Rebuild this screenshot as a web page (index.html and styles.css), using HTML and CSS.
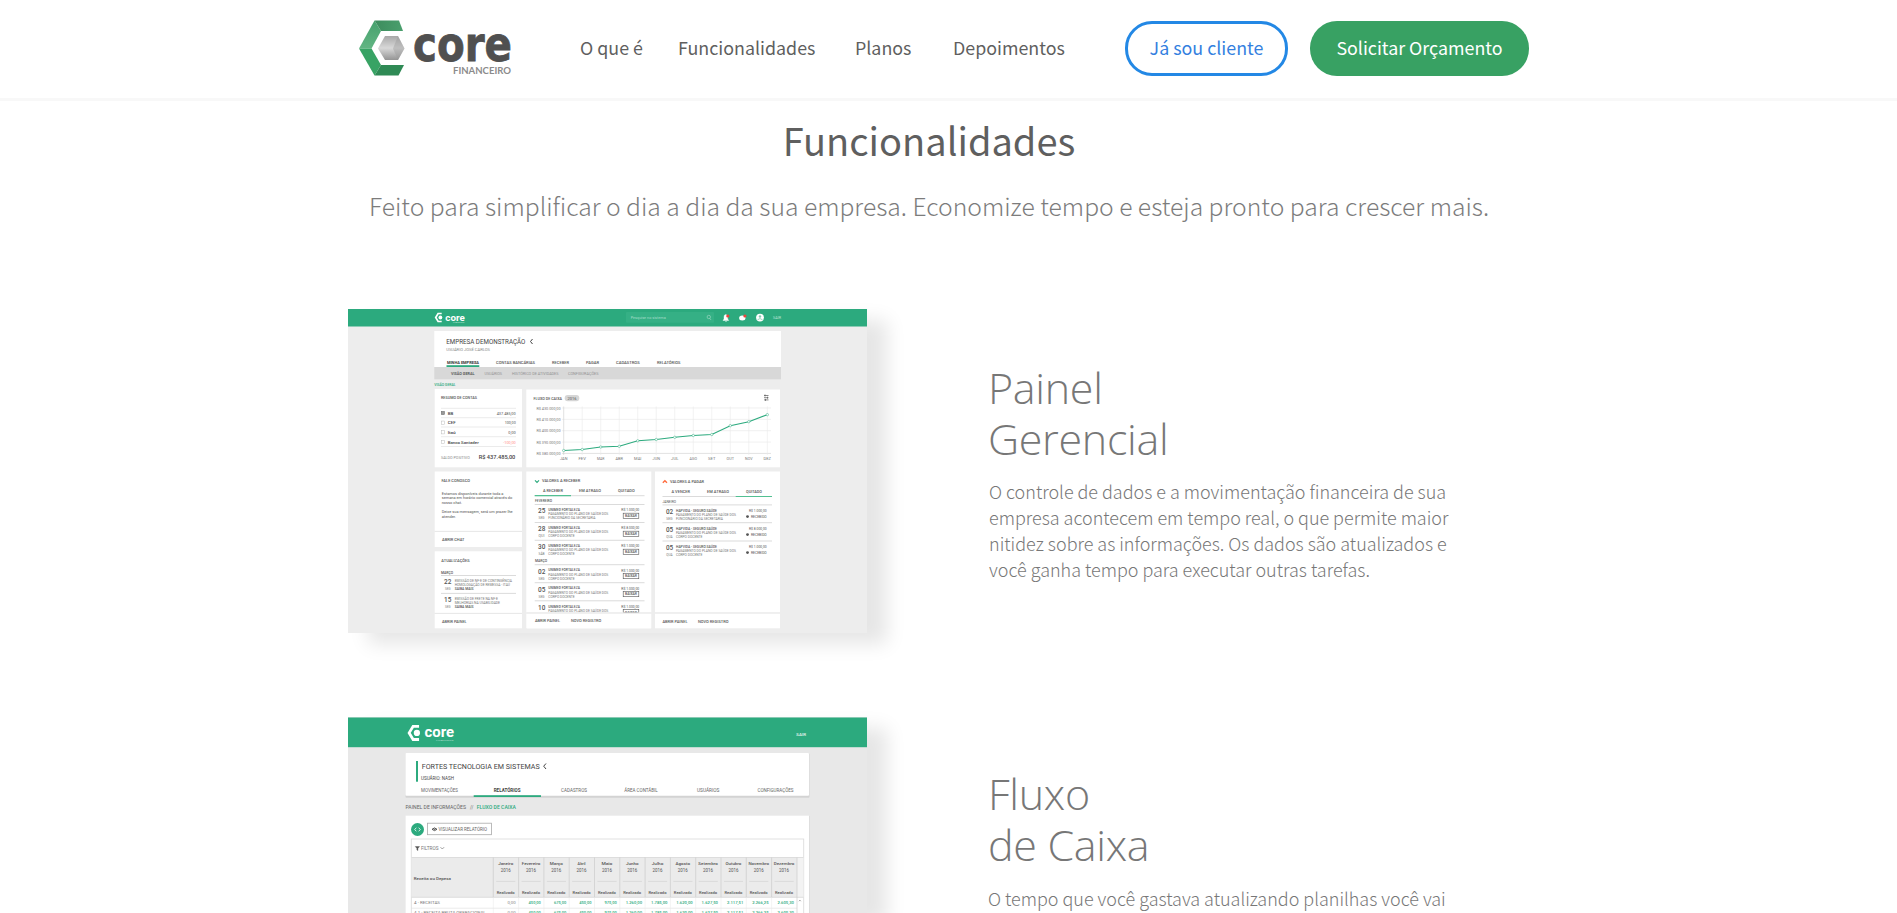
FILE: index.html
```html
<!DOCTYPE html>
<html lang="pt-BR">
<head>
<meta charset="utf-8">
<title>Core Financeiro</title>
<link rel="stylesheet" href="styles.css">
</head>
<body>
<header class="topbar">
  <div class="topbar-inner">
    <a class="brand">
      <svg width="153" height="58" viewBox="0 0 153 58">
        <defs>
          <linearGradient id="g1" x1="0" y1="0" x2="0" y2="1"><stop offset="0" stop-color="#45a06c"/><stop offset="1" stop-color="#62b583"/></linearGradient>
          <linearGradient id="g2" x1="0" y1="0" x2="1" y2="0"><stop offset="0" stop-color="#3d8c5d"/><stop offset="1" stop-color="#4a9f6d"/></linearGradient>
          <linearGradient id="g3" x1="0" y1="0" x2="0" y2="1"><stop offset="0" stop-color="#a8a8a8"/><stop offset=".5" stop-color="#d8d8d8"/><stop offset="1" stop-color="#949494"/></linearGradient>
        </defs>
        <path d="M0 28.500 15.500 0.500 22 11 12.500 28.500Z" fill="url(#g1)"/>
        <path d="M15.500 0.500H40L44 11H22Z" fill="url(#g2)"/>
        <path d="M0 28.500H12.500L22 45 15.500 55.500Z" fill="#38a364"/>
        <path d="M22 45H45L39.500 55.500H15.500Z" fill="#2f8a55"/>
        <path d="M19 28.500 26 16H39L45.500 28.500 39 40H26Z" fill="url(#g3)"/>
        <path d="M34 28.500 39 16 45.500 28.500 39 40Z" fill="#999" opacity=".4"/>
        <text x="54" y="41" class="brand-word" textLength="99" lengthAdjust="spacingAndGlyphs">core</text>
        <text x="94" y="53.500" class="brand-sub" textLength="58" lengthAdjust="spacingAndGlyphs">FINANCEIRO</text>
      </svg>
    </a>
    <nav class="menu">
      <a>O que é</a><a>Funcionalidades</a><a>Planos</a><a>Depoimentos</a>
    </nav>
    <a class="btn btn-outline">Já sou cliente</a>
    <a class="btn btn-solid">Solicitar Orçamento</a>
  </div>
</header>
<main class="features">
  <h1 class="title">Funcionalidades</h1>
  <p class="lead">Feito para simplificar o dia a dia da sua empresa. Economize tempo e esteja pronto para crescer mais.</p>
  <section class="feature">
    <svg class="shot" id="shot-dashboard" width="519" height="324" viewBox="348 309 519 324"></svg>
    <div class="copy">
      <h2>Painel<br>Gerencial</h2>
      <p>O controle de dados e a movimentação financeira de sua<br>empresa acontecem em tempo real, o que permite maior<br>nitidez sobre as informações. Os dados são atualizados e<br>você ganha tempo para executar outras tarefas.</p>
    </div>
  </section>
  <section class="feature feature-last">
    <svg class="shot" id="shot-cashflow" width="519" height="196" viewBox="348 717 519 196"></svg>
    <div class="copy copy-second">
      <h2>Fluxo<br>de Caixa</h2>
      <p>O tempo que você gastava atualizando planilhas você vai</p>
    </div>
  </section>
</main>
<script src="shots.js"></script>
</body>
</html>
```

FILE: styles.css
```css
* { box-sizing: border-box; }
html, body { margin: 0; height: 913px; overflow: hidden; }
body {
  background: #fff;
  color: #5f5f5f;
  font-family: "Noto Sans CJK SC", "Noto Sans", sans-serif;
}
.topbar { height: 101px; border-bottom: 3px solid #f8f8f8; background: #fff; }
.topbar-inner { display: flex; align-items: flex-start; width: 1179px; margin-left: 359px; padding-top: 20px; }
.brand { width: 221px; height: 58px; }
.brand svg { display: block; overflow: visible; }
.brand-word { font: bold 48px "DejaVu Sans", sans-serif; fill: #505050; stroke: #505050; stroke-width: 0.8px; }
.brand-sub { font: bold 8.500px Lato, sans-serif; fill: #8b8b8b; }
.menu { display: grid; grid-template-columns: 98px 177px 98px 172px; height: 56px; line-height: 54px; font-size: 17.850px; white-space: nowrap; }
.btn { height: 55px; margin-top: 1px; border-radius: 27px; text-align: center; font-size: 17.850px; white-space: nowrap; }
.btn-outline { width: 163px; line-height: 46px; border: 3px solid #2388e5; color: #347fe0; }
.btn-solid { width: 219px; margin-left: 22px; line-height: 52px; background: #38a163; color: #fff; }
.title { margin: 0; padding-top: 12px; height: 72px; line-height: 54px; text-align: center; font-weight: 400; font-size: 38px; padding-right: 39px; }
.lead { margin: 0; height: 136px; line-height: 64px; text-align: center; font-weight: 300; font-size: 24.670px; color: #7c7c7c; padding-right: 39px; white-space: nowrap; }
.feature { display: flex; align-items: flex-start; height: 408px; margin-left: 348px; }
.feature-last { height: 196px; }
.shot { flex: none; box-shadow: 20px 11px 18px 0 #e6e6e6; }
.copy { margin-left: 121px; padding-top: 53px; white-space: nowrap; color: #777; }
.copy h2 { margin: 0; font: 300 43px/51px "Open Sans", sans-serif; letter-spacing: -0.3px; }
.copy p { margin: 14px 0 0 1px; font-weight: 300; font-size: 17.970px; line-height: 26px; }
.copy-second { height: 196px; padding-top: 51px; }
.copy-second p { margin: 15px 0 0; }
.shot text { font-family: Roboto, sans-serif; fill: #555; }
```

FILE: shots.js
```js
const NS = 'http://www.w3.org/2000/svg';
const GREEN = '#2caa7e';

function pen(id) {
  const root = document.getElementById(id);
  const add = (tag, attrs) => {
    const n = document.createElementNS(NS, tag);
    for (const k in attrs) n.setAttribute(k, attrs[k]);
    root.appendChild(n);
    return n;
  };
  return {
    add,
    rect: (x1, y1, x2, y2, fill, more) => add('rect', { x: x1, y: y1, width: x2 - x1, height: y2 - y1, fill, ...more }),
    line: (x1, y, x2, stroke = '#ddd', w = 0.7) => add('path', { d: `M${x1} ${y}H${x2}`, stroke, 'stroke-width': w }),
    path: (d, stroke, w = 0.8, fill = 'none') => add('path', { d, stroke, 'stroke-width': w, fill }),
    text: (x1, x2, y, str, size = 4, fill = '#666', weight = 400) => {
      const n = add('text', { x: x1, y, textLength: x2 - x1, lengthAdjust: 'spacingAndGlyphs' });
      n.style.fontSize = size + 'px';
      n.style.fill = fill;
      n.style.fontWeight = weight;
      n.textContent = str;
    }
  };
}

function logo(p, x, y, s) {
  p.path(`M${x + 7 * s} ${y + 1.200 * s}H${x + 3.400 * s}L${x + s} ${y + 5.200 * s}L${x + 3.400 * s} ${y + 9.200 * s}H${x + 7 * s}`, '#fff', 1.700 * s);
  p.add('circle', { cx: x + 5.700 * s, cy: y + 5.200 * s, r: 1.900 * s, fill: '#fff' });
}

function dashboard() {
  const p = pen('shot-dashboard'), t = p.text;
  p.rect(348, 309, 867, 633, '#ededed');
  p.rect(348, 309, 867, 326.500, GREEN);
  logo(p, 434.700, 312.300, 1);
  t(445.300, 464.700, 320.500, 'core', 9, '#fff', 700);
  t(453, 464.500, 323, 'FINANCEIRO', 2, '#bfe5d6');
  p.rect(626, 312, 714, 322.700, '#35b085', { rx: 1 });
  t(630.700, 665.700, 318.600, 'Pesquise no sistema', 4, '#a5dcc8');
  p.path('M710 318.500L711 320M710.500 317A1.700 1.700 0 1 1 707.100 317A1.700 1.700 0 1 1 710.500 317', '#a5dcc8', 0.6);
  p.path('M723 320.500L724 319V317Q724 314.500 725.700 314.500Q727.700 314.500 727.700 317V319L728.700 320.500ZM725 321.500H727', '#fff', 0.4, '#fff');
  p.add('circle', { cx: 727.800, cy: 316, r: 1.600, fill: '#e8453c' });
  p.add('ellipse', { cx: 742.300, cy: 318, rx: 3.200, ry: 2.500, fill: '#fff' });
  p.add('circle', { cx: 744.900, cy: 316, r: 1.600, fill: '#e8453c' });
  p.add('circle', { cx: 760, cy: 317.600, r: 3.900, fill: '#fff' });
  p.add('circle', { cx: 760, cy: 316.500, r: 1.200, fill: '#83c9b0' });
  p.path('M757.500 319.800Q760 317.300 762.500 319.800', '#83c9b0');
  t(773, 781, 318.900, 'SAIR', 3.6, '#b9e3d4');

  p.rect(434.300, 331, 781, 367, '#fff');
  p.rect(434.300, 367, 781, 379.300, '#d8d8d8');
  t(446.300, 525.300, 343.800, 'EMPRESA DEMONSTRAÇÃO', 6.4, '#444');
  p.path('M532.500 339L530.500 341.500L532.500 344', '#444', 1);
  t(446.300, 490, 350.600, 'USUÁRIO JOSÉ CARLOS', 3.7, '#888');
  [[447, 479, 'MINHA EMPRESA', 700], [496, 535, 'CONTAS BANCÁRIAS', 500], [552, 569, 'RECEBER', 500], [586, 599, 'PAGAR', 500], [616, 639.700, 'CADASTROS', 500], [657, 680.500, 'RELATÓRIOS', 500]]
    .forEach(([a, b, s, w]) => t(a, b, 363.800, s, 4, w === 700 ? '#333' : '#555', w));
  p.rect(446.500, 365.200, 479.300, 367, GREEN);
  t(451, 474.500, 375, 'VISÃO GERAL', 4, '#555', 600);
  t(484.500, 502, 375, 'USUÁRIOS', 4, '#929292');
  t(512, 558.500, 375, 'HISTÓRICO DE ATIVIDADES', 4, '#929292');
  t(568, 598.500, 375, 'CONFIGURAÇÕES', 4, '#929292');
  t(434.300, 455.700, 385.700, 'VISÃO GERAL', 3.7, GREEN, 500);

  [[434.700, 389, 522, 467.300], [526.300, 389.500, 780, 467.300], [434.700, 471.500, 522, 547], [434.700, 551.300, 522, 628.300], [526.300, 471.500, 651.300, 628.300], [655, 471.500, 780, 628.300]]
    .forEach(([a, b, c, d]) => p.rect(a, b, c, d, '#fff'));

  t(441, 477, 399.400, 'RESUMO DE CONTAS', 3.9, '#555', 500);
  [408.300, 417.700, 427, 436.700, 446.500].forEach(y => p.line(441, y, 516, '#e2e2e2'));
  [['BB', 5.500, '437.485,00', 19], ['CEF', 8, '100,00', 11], ['Itaú', 8, '0,00', 7.500], ['Banco Santader', 31, '-100,00', 12.500]].forEach(([n, w, v, vw], i) => {
    const y = 414.800 + i * 9.650;
    p.rect(441.300, y - 3.400, 444.500, y - 0.200, i ? '#fff' : '#999', { stroke: i ? '#bbb' : '#666', 'stroke-width': 0.5 });
    t(447.700, 447.700 + w, y, n, 4.3, '#444', 500);
    t(515.700 - vw, 515.700, y, v, 3.9, i === 3 ? '#ff8d8d' : '#555');
  });
  t(441, 469.700, 459, 'SALDO POSITIVO', 3.8, '#888');
  t(478.700, 515.300, 459.300, 'R$ 437.485,00', 6, '#444', 500);

  t(533.500, 562, 399.800, 'FLUXO DE CAIXA', 3.9, '#555', 500);
  p.rect(564.700, 395, 579.300, 401.300, '#d6d6d6', { rx: 3 });
  t(567.500, 576.500, 399.800, '2016', 4, '#555');
  p.path('M764 395.500H768.500M764 397.700H768.500M764 399.900H768.500M765 394.500V396.500M767.500 396.700V398.700M765.500 398.900V400.900', '#555', 0.7);
  [430, 410, 400, 390, 380].forEach((v, i) => {
    const y = 408 + i * 11.350;
    t(536.500, 560.500, y + 1.500, `R$ ${v}.000,00`, 3.9, '#777');
    p.line(562, y, 771, i === 4 ? '#ccc' : '#e6e6e6', 0.6);
  });
  const ys = [450.500, 449.500, 447, 446.300, 440.800, 439.500, 437.300, 435.500, 434.500, 425.700, 421.700, 414.700];
  const months = ['JAN', 'FEV', 'MAR', 'ABR', 'MAI', 'JUN', 'JUL', 'AGO', 'SET', 'OUT', 'NOV', 'DEZ'];
  const px = i => 563.700 + i * 18.510;
  months.forEach((m, i) => {
    p.path(`M${px(i)} 406.500V455`, i ? '#eaeaea' : '#ccc', 0.6);
    t(px(i) - 3.700, px(i) + 3.700, 460, m, 3.7, '#777');
  });
  p.path('M' + ys.map((y, i) => `${px(i)} ${y}`).join('L'), GREEN, 1.1);
  ys.forEach((y, i) => p.add('circle', { cx: px(i), cy: y, r: 1.200, fill: '#fff', stroke: GREEN, 'stroke-width': 0.5 }));

  t(441.500, 470, 482.300, 'FALE CONOSCO', 3.9, '#555', 500);
  [[503.500, 494.700, 'Estamos disponíveis durante toda a'], [512.300, 499.200, 'semana em horário comercial através do'], [462, 503.800, 'nosso chat.'], [512.700, 512.800, 'Deixe sua mensagem, será um prazer lhe'], [456, 517.500, 'atender.']]
    .forEach(([b, y, s]) => t(441.700, b, y, s, 3.9, '#555'));
  p.line(434.700, 531.400, 522);
  t(442, 464.500, 541, 'ABRIR CHAT', 4, '#555', 500);
  t(441.300, 469.700, 561.700, 'ATUALIZAÇÕES', 3.9, '#555', 500);
  t(441, 453, 573.800, 'MARÇO', 3.5, '#555', 500);
  p.line(441, 575.500, 516, '#ccc');
  [['22', 'EMISSÃO DE NF-E DE CONTINGÊNCIA', 512, 'HOMOLOGAÇÃO DE REMESSA - ITAÚ', 510], ['15', 'EMISSÃO DE FRETE NA NF-E', 498, 'MELHORIAS NA USABILIDADE', 500]].forEach(([d, a, aw, b, bw], i) => {
    const y = i * 18.200;
    t(444, 451.300, 583.900 + y, d, 6.3, '#555', 500);
    t(445, 450.500, 589.600 + y, 'SEG', 3.2, '#777');
    t(454.700, aw, 581.800 + y, a, 3.5, '#777');
    t(454.700, bw, 585.800 + y, b, 3.5, '#777');
    t(454.700, 473.500, 589.700 + y, 'SAIBA MAIS', 3.5, '#555', 500);
  });
  p.line(441, 593.400, 516, '#ccc');
  p.line(434.700, 613.400, 522);
  t(442, 466.700, 622.700, 'ABRIR PAINEL', 4, '#555', 500);

  p.path('M535 480.300L537 482.300L539 480.300', GREEN, 1.2);
  t(542, 580.300, 482.300, 'VALORES A RECEBER', 3.9, '#555', 500);
  t(543, 563, 492.300, 'A RECEBER', 3.9, '#555', 500);
  t(579, 601, 492.300, 'EM ATRASO', 3.9, '#555', 500);
  t(618, 634.700, 492.300, 'QUITADO', 3.9, '#555', 500);
  p.line(534.700, 495.700, 644.500, '#ccc');
  p.line(534.700, 495.700, 571, '#52c092', 1.2);
  t(535, 552, 502, 'FEVEREIRO', 3.4, '#555', 500);
  t(535, 547, 562.300, 'MARÇO', 3.4, '#555', 500);
  [504.500, 522.500, 540.300, 564.700, 582.700, 600.800].forEach(y => p.line(534.700, y, 644.500, '#ccc'));
  const plan = 'PAGAMENTO DO PLANO DE SAÚDE DOS';
  [[504.500, '25', 'SEG'], [522.500, '28', 'QUI'], [540.500, '30', 'SÁB'], [564.700, '02', 'SEG'], [582.700, '05', 'SEG'], [600.900, '10', 'SEG']].forEach(([y, d, w], i) => {
    t(538, 545.300, y + 8.900, d, 6.4, '#555', 500);
    t(548.300, 580, y + 6.700, 'UNIMED FORTALEZA', 3.5, '#555', 500);
    t(548.300, 608.300, y + 10.800, plan, 3.5, '#777');
    t(621.300, 639.300, y + 6.800, i === 1 ? 'R$ 8.000,00' : 'R$ 1.000,00', 3.7, '#555');
    if (i < 5) {
      t(538.500, 544.500, y + 14.900, w, 3.2, '#777');
      t(548.300, i ? 574.700 : 595.500, y + 14.800, i ? 'CORPO DOCENTE' : 'FUNCIONÁRIO DA SECRETARIA', 3.5, '#777');
    }
    p.rect(623.200, y + 8.700, 638.800, i < 5 ? y + 14 : 612.500, '#fff', { stroke: '#555', 'stroke-width': 0.6 });
    t(625, 637, y + 12.700, 'BAIXAR', 3.4, '#555', 500);
  });
  p.rect(527, 612.500, 651, 628.300, '#fff');
  p.line(526.300, 613, 651.300, '#d2d2d2');
  t(535, 560, 622.200, 'ABRIR PAINEL', 4, '#555', 500);
  t(571, 601.300, 622.200, 'NOVO REGISTRO', 4, '#555', 500);

  p.path('M662.800 482.800L664.900 480.700L667 482.800', '#ff6b3d', 1.3);
  t(670, 704, 483.100, 'VALORES A PAGAR', 3.9, '#555', 500);
  t(671.500, 690, 493.200, 'A VENCER', 3.9, '#555', 500);
  t(707, 729, 493.200, 'EM ATRASO', 3.9, '#555', 500);
  t(746, 762, 493.200, 'QUITADO', 3.9, '#555', 500);
  p.line(662.500, 496.500, 772, '#ccc');
  p.line(735.700, 496.500, 772, '#52c092', 1.2);
  t(662.500, 676, 503, 'JANEIRO', 3.4, '#555');
  [504.900, 522.700, 541].forEach(y => p.line(662.500, y, 772, '#ccc'));
  ['02', '05', '05'].forEach((d, i) => {
    const y = 504.900 + i * 18;
    t(666, 673.200, y + 9, d, 6.4, '#555', 500);
    t(666.300, 672.500, y + 15, i ? 'QUA' : 'SEG', 3.2, '#777');
    t(676, 717, y + 7, 'HAPVIDA - SEGURO SAÚDE', 3.5, '#555', 500);
    t(676, 736, y + 11.100, plan, 3.5, '#777');
    t(676, i ? 702.500 : 723, y + 15.100, i ? 'CORPO DOCENTE' : 'FUNCIONÁRIO DA SECRETARIA', 3.5, '#777');
    t(749, 766.700, y + 7, i === 1 ? 'R$ 8.000,00' : 'R$ 1.000,00', 3.7, '#555');
    p.add('circle', { cx: 747.500, cy: y + 11.700, r: 1.400, fill: '#555' });
    t(751, 766.700, y + 13, 'RECEBIDO', 3.5, '#555');
  });
  p.line(655, 613, 780, '#d2d2d2');
  t(662.500, 687.500, 622.500, 'ABRIR PAINEL', 4, '#555', 500);
  t(698, 728.500, 622.500, 'NOVO REGISTRO', 4, '#555', 500);
}

function cashflow() {
  const p = pen('shot-cashflow'), t = p.text;
  p.rect(348, 717, 867, 913, '#e8e8e8');
  p.rect(348, 717.500, 867, 747.200, GREEN);
  logo(p, 407.500, 724.300, 1.65);
  t(424.500, 454, 737, 'core', 14, '#fff', 700);
  t(436, 453.500, 740.700, 'FINANCEIRO', 2.5, '#a9dcc9');
  t(796.300, 806, 735.700, 'SAIR', 4, '#e5f5ef', 500);

  p.rect(405.500, 753.500, 809.500, 797.700, '#d3d3d3', { rx: 1 });
  p.rect(405.500, 753, 809, 795.700, '#fff', { rx: 1 });
  p.rect(416, 761, 418, 781.700, GREEN);
  t(421.700, 539.700, 768.700, 'FORTES TECNOLOGIA EM SISTEMAS', 7.5, '#444');
  p.path('M546 763.500L543.700 766.200L546 769', '#444', 1);
  t(421, 454, 780.200, 'USUÁRIO: NASH', 4.5, '#444');
  [[421, 458, 'MOVIMENTAÇÕES'], [493.700, 520.500, 'RELATÓRIOS'], [561, 587, 'CADASTROS'], [624.300, 657.700, 'ÁREA CONTÁBIL'], [697, 719.300, 'USUÁRIOS'], [757.500, 793.500, 'CONFIGURAÇÕES']]
    .forEach(([a, b, s], i) => t(a, b, 792.200, s, 4.5, i === 1 ? '#444' : '#666', i === 1 ? 700 : 400));
  p.rect(473.700, 795.200, 541, 797, GREEN);
  t(405.500, 466, 808.600, 'PAINEL DE INFORMAÇÕES', 5, '#666');
  t(470, 473.300, 808.600, '//', 5, '#666');
  t(476.700, 516, 808.600, 'FLUXO DE CAIXA', 5, GREEN, 500);

  p.rect(405.500, 816, 809.600, 913, '#d8d8d8');
  p.rect(405.500, 815.700, 809, 913, '#fff');
  p.add('circle', { cx: 417.500, cy: 829.500, r: 6.500, fill: GREEN });
  p.path('M416.300 827.700L414.700 829.500L416.300 831.300M418.700 827.700L420.300 829.500L418.700 831.300', '#fff', 0.8);
  p.rect(427.500, 823.200, 491.500, 834.700, '#fff', { stroke: '#aaa', 'stroke-width': 0.8 });
  p.path('M432 829.300Q434.500 826.500 437 829.300Q434.500 832 432 829.300ZM433.800 829.300H435.300', '#555', 1);
  t(438.500, 487, 831, 'VISUALIZAR RELATÓRIO', 4.7, '#666');
  p.rect(411.300, 839, 803.700, 930, '#fff', { stroke: '#ddd', 'stroke-width': 0.9 });
  p.path('M415.300 846.500H419.500L417.900 848.500V850.500L416.900 850V848.500Z', '#555', 0.4, '#555');
  t(421, 438.500, 850, 'FILTROS', 4.7, '#777');
  p.path('M440.500 847.200L442.300 849L444.100 847.200', '#777', 0.7);
  p.rect(411.700, 857.500, 797, 897.300, '#ebebeb');
  p.rect(797, 857.500, 803.300, 897.300, '#f3f3f3');
  p.line(411.700, 857.500, 803.300, '#ccc', 0.6);
  p.line(411.700, 897.300, 803.300, '#ccc', 0.6);
  t(413.700, 451, 879.500, 'Receita ou Depesa', 4.3, '#555', 500);
  t(414, 440, 903.700, '4 - RECEITAS', 4.3, '#777');
  t(414, 485.700, 914.300, '4.1 - RECEITA BRUTA OPERACIONAL', 4.3, '#777');
  p.line(411.700, 908.200, 797, '#ddd', 0.6);
  p.path('M799 901.200L799.900 900.200L800.800 901.200', '#777', 0.7);
  const cols = [['Janeiro', '0,00'], ['Fevereiro', '450,00'], ['Março', '675,00'], ['Abril', '450,00'], ['Maio', '975,00'], ['Junho', '1.260,00'], ['Julho', '1.785,00'], ['Agosto', '1.620,00'], ['Setembro', '1.627,50'], ['Outubro', '2.117,51'], ['Novembro', '2.266,25'], ['Dezembro', '2.605,30']];
  const wide = [15, 18.500, 13, 8, 11, 12.500, 11.500, 14.500, 19.500, 16, 20.500, 20.500];
  cols.forEach(([m, v], i) => {
    const x = 493.300 + i * 25.300, c = x + 12.400;
    p.path(`M${x} 857.500V897.300`, '#ccc', 0.7);
    p.path(`M${x} 897.300V913`, '#e8e8e8', 0.5);
    t(c - wide[i] / 2, c + wide[i] / 2, 865, m, 4.3, '#555', 500);
    t(c - 5, c + 5, 871.700, '2016', 4.5, '#555');
    p.line(x + 3, 881.400, x + 22, '#ccc', 0.6);
    t(c - 9, c + 9, 893.600, 'Realizado', 4.3, '#555', 500);
    const w = v.length * 2.050;
    [903.800, 914.300].forEach(y => t(x + 22.300 - w, x + 22.300, y, v, 4.3, i ? GREEN : '#888', i ? 500 : 400));
  });
  p.path('M797 857.500V913', '#ccc', 0.7);
}

dashboard();
cashflow();
```
